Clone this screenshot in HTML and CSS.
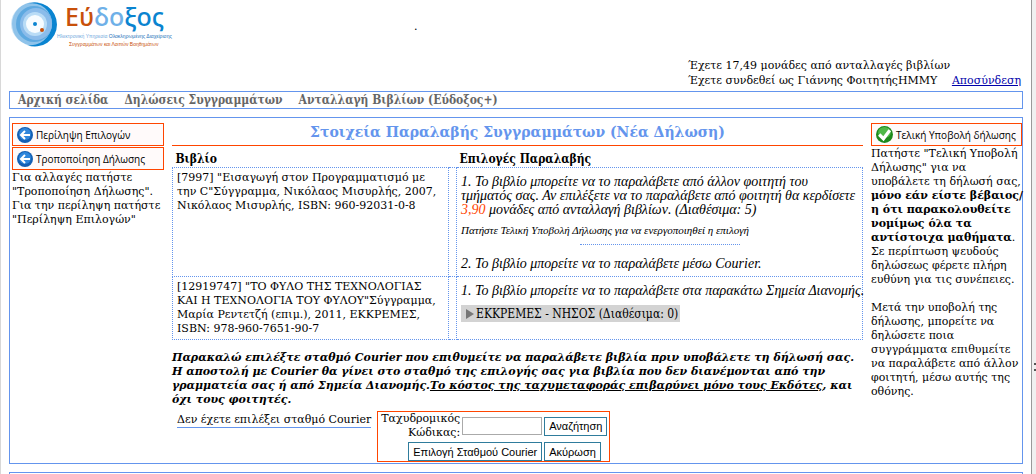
FILE: index.html
```html
<!DOCTYPE html>
<html lang="el">

<head>
	<meta charset="utf-8">
	<title>Εύδοξος</title>
	<link rel="stylesheet" href="styles.css">
</head>

<body>
	<div id="window">
		<div id="page">
			<div id="header">
				<svg class="logo" width="164" height="52" viewBox="0 0 164 52" role="img" aria-label="Εύδοξος">
					<circle cx="22" cy="23" r="20" fill="#cfe6f7" />
					<circle cx="25" cy="23" r="22" fill="#8fc3ea" />
					<path d="M18 3 A22 22 0 1 1 18 44 A22 22 0 0 0 43 24 A20 20 0 0 0 18 3 Z" fill="#0a84d0" />
					<circle cx="25" cy="23" r="18" fill="#5ea9e0" />
					<circle cx="27" cy="23" r="16" fill="#8bbcea" />
					<circle cx="26" cy="23" r="12" fill="#b9dcf6" />
					<circle cx="26" cy="23" r="9" fill="#f7fcff" />
					<circle cx="26" cy="23" r="2" fill="#0a84d0" />
					<circle cx="33" cy="29" r="2" fill="#c8500a" />
					<text class="logo-name" x="56" y="25"><tspan fill="#c8500a">Εύ</tspan><tspan fill="#6fb0e8">δο</tspan><tspan fill="#0a84d0">ξος</tspan></text>
					<text class="logo-line" x="48" y="37" fill="#6fa8dc">Ηλεκτρονική Υπηρεσία <tspan fill="#1a6fb8">Ολοκληρωμένης Διαχείρισης</tspan></text>
					<text class="logo-line" x="60" y="45" fill="#c8500a">Συγγραμμάτων και Λοιπών Βοηθημάτων</text>
				</svg>
				<span class="dot">.</span>
				<div class="user">
					<div>Έχετε 17,49 μονάδες από ανταλλαγές βιβλίων</div>
					<div class="user-line">
						<span>Έχετε συνδεθεί ως Γιάννης ΦοιτητήςΗΜΜΥ</span>
						<a href="#">Αποσύνδεση</a>
					</div>
				</div>
			</div>

			<div id="menu">
				<a href="#">Αρχική σελίδα</a>
				<a href="#">Δηλώσεις Συγγραμμάτων</a>
				<a href="#">Ανταλλαγή Βιβλίων (Εύδοξος+)</a>
			</div>

			<div id="main">
				<div class="side">
					<button type="button" class="action">
						<svg width="16" height="16" viewBox="0 0 16 16">
							<circle cx="8" cy="8" r="8" fill="#1560b4" />
							<circle cx="8" cy="7" r="6" fill="#2f86dc" />
							<path d="M13 8 H4 M8 4 L4 8 L8 12" fill="none" stroke="#fff" stroke-width="2" />
						</svg>
						Περίληψη Επιλογών
					</button>
					<button type="button" class="action">
						<svg width="16" height="16" viewBox="0 0 16 16">
							<circle cx="8" cy="8" r="8" fill="#1560b4" />
							<circle cx="8" cy="7" r="6" fill="#2f86dc" />
							<path d="M13 8 H4 M8 4 L4 8 L8 12" fill="none" stroke="#fff" stroke-width="2" />
						</svg>
						Τροποποίηση Δήλωσης
					</button>
					<p>Για αλλαγές πατήστε<br>"Τροποποίηση Δήλωσης".<br>Για την περίληψη πατήστε<br>"Περίληψη Επιλογών"</p>
				</div>

				<div id="content">
					<h1>Στοιχεία Παραλαβής Συγγραμμάτων (Νέα Δήλωση)</h1>
					<table class="books">
						<tr>
							<th class="book">Βιβλίο</th>
							<th class="gap"></th>
							<th>Επιλογές Παραλαβής</th>
						</tr>
						<tr>
							<td>[7997] "Εισαγωγή στον Προγραμματισμό με<br>την C"Σύγγραμμα, Νικόλαος Μισυρλής, 2007,<br>Νικόλαος Μισυρλής, ISBN: 960-92031-0-8</td>
							<td></td>
							<td class="options">
								<p>1. Το βιβλίο μπορείτε να το παραλάβετε από άλλον φοιτητή του<br>τμήματός σας. Αν επιλέξετε να το παραλάβετε από φοιτητή θα κερδίσετε<br><span class="units">3,90</span> μονάδες από ανταλλαγή βιβλίων. (Διαθέσιμα: 5)</p>
								<p class="note">Πατήστε Τελική Υποβολή Δήλωσης για να ενεργοποιηθεί η επιλογή</p>
								<hr>
								<p>2. Το βιβλίο μπορείτε να το παραλάβετε μέσω Courier.</p>
							</td>
						</tr>
						<tr>
							<td>[12919747] "ΤΟ ΦΥΛΟ ΤΗΣ ΤΕΧΝΟΛΟΓΙΑΣ<br>ΚΑΙ Η ΤΕΧΝΟΛΟΓΙΑ ΤΟΥ ΦΥΛΟΥ"Σύγγραμμα,<br>Μαρία Ρεντετζή (επιμ.), 2011, ΕΚΚΡΕΜΕΣ,<br>ISBN: 978-960-7651-90-7</td>
							<td></td>
							<td class="options">
								<p>1. Το βιβλίο μπορείτε να το παραλάβετε στα παρακάτω Σημεία Διανομής.</p>
								<div class="point">
									<svg width="9" height="10" viewBox="0 0 9 10"><path d="M1 0 L9 5 L1 10 Z" fill="#777" /></svg>
									ΕΚΚΡΕΜΕΣ - ΝΗΣΟΣ (Διαθέσιμα: 0)
								</div>
							</td>
						</tr>
					</table>

					<p class="warning">Παρακαλώ επιλέξτε σταθμό Courier που επιθυμείτε να παραλάβετε βιβλία πριν υποβάλετε τη δήλωσή σας.<br>Η αποστολή με Courier θα γίνει στο σταθμό της επιλογής σας για βιβλία που δεν διανέμονται από την<br>γραμματεία σας ή από Σημεία Διανομής.<u>Το κόστος της ταχυμεταφοράς επιβαρύνει μόνο τους Εκδότες</u>, και<br>όχι τους φοιτητές.</p>

					<div class="courier">
						<span class="station">Δεν έχετε επιλέξει σταθμό Courier</span>
						<form class="search">
							<label for="zip">Ταχυδρομικός<br>Κώδικας:</label>
							<input type="text" id="zip">
							<button type="button">Αναζήτηση</button>
							<button type="button" class="select">Επιλογή Σταθμού Courier</button>
							<button type="button">Ακύρωση</button>
						</form>
					</div>
				</div>

				<div class="side submit">
					<button type="button" class="action">
						<svg width="17" height="17" viewBox="0 0 16 16">
							<circle cx="8" cy="8" r="8" fill="#1d8a1d" />
							<ellipse cx="8" cy="6" rx="6" ry="5" fill="#4fb848" />
							<path d="M3 8 L7 12 L13 4" fill="none" stroke="#fff" stroke-width="3" />
						</svg>
						Τελική Υποβολή δήλωσης
					</button>
					<p>Πατήστε "Τελική Υποβολή<br>Δήλωσης" για να<br>υποβάλετε τη δήλωσή σας,<br><b>μόνο εάν είστε βέβαιος/<br>η ότι παρακολουθείτε<br>νομίμως όλα τα<br>αντίστοιχα μαθήματα</b>.<br>Σε περίπτωση ψευδούς<br>δηλώσεως φέρετε πλήρη<br>ευθύνη για τις συνέπειες.</p>
					<p class="later">Μετά την υποβολή της<br>δήλωσης, μπορείτε να<br>δηλώσετε ποια<br>συγγράμματα επιθυμείτε<br>να παραλάβετε από άλλον<br>φοιτητή, μέσω αυτής της<br>οθόνης.</p>
				</div>
			</div>

			<div id="footer"></div>
		</div>
		<div id="splitter"><span class="grip"></span></div>
	</div>
</body>

</html>
```
FILE: styles.css
```css
* {
	box-sizing: border-box;
}

body {
	margin: 0;
	overflow: hidden;
	background-color: white;
	color: black;
	font-family: "DejaVu Serif", serif;
	font-size: 11px;
	line-height: 14px;
}

p {
	margin: 0;
	white-space: nowrap;
}

#window {
	display: flex;
	height: 100vh;
	border-left: 1px solid #D8D8D8;
}

#page {
	flex: 1;
	min-width: 0;
	padding: 0 8px;
}

#splitter {
	display: flex;
	flex: none;
	justify-content: flex-end;
	width: 5px;
	padding-top: 363px;
	border-left: 1px solid #999;
	background-color: #F0F0F0;
}

.grip {
	width: 2px;
	height: 8px;
	border-top: 2px solid #555;
	border-bottom: 2px solid #555;
}

/* header */

#header {
	display: flex;
	height: 91px;
}

.logo {
	flex: none;
	margin-top: 1px;
	overflow: visible;
}

.logo-name {
	font-family: "Noto Sans", sans-serif;
	font-size: 25px;
	font-weight: 500;
}

.logo-line {
	font-family: "Liberation Sans", sans-serif;
	font-size: 5px;
}

.dot {
	margin: 20px 0 0 241px;
}

.user {
	align-self: flex-end;
	width: 335px;
	margin-left: auto;
	padding-bottom: 3px;
	line-height: 15px;
	white-space: nowrap;
}

.user-line {
	display: flex;
	justify-content: space-between;
	padding-right: 2px;
}

.user a {
	color: #0000AA;
}

#menu {
	display: flex;
	gap: 16px;
	height: 18px;
	padding: 0 8px;
	border: 1px solid cornflowerblue;
	font-family: "DejaVu Serif Condensed", "DejaVu Serif", serif;
	font-size: 12px;
	line-height: 16px;
}

#menu a {
	color: #666;
	font-weight: bold;
	text-decoration: none;
}

/* three columns */

#main {
	display: flex;
	gap: 8px;
	height: 347px;
	margin-top: 8px;
	padding: 5px 0 0 2px;
	border: 1px solid cornflowerblue;
}

.side {
	flex: none;
	width: 152px;
}

.submit {
	width: 151px;
}

.side p {
	margin-top: 1px;
}

.side .later {
	margin-top: 14px;
}

.action {
	display: flex;
	align-items: center;
	gap: 3px;
	width: 100%;
	height: 23px;
	margin-bottom: 1px;
	padding: 0 4px;
	border: 1px solid orangered;
	background-color: snow;
	color: black;
	font-family: "Open Sans", sans-serif;
	font-size: 10px;
	font-weight: 500;
	white-space: nowrap;
}

#content {
	flex: 1;
	min-width: 0;
}

#content h1 {
	margin: 0;
	padding-bottom: 4px;
	border-bottom: 1px solid orangered;
	color: cornflowerblue;
	font-size: 14px;
	line-height: 18px;
	text-align: center;
}

.books {
	width: 100%;
	margin-top: 6px;
	border-collapse: collapse;
	table-layout: fixed;
}

.books th {
	padding: 0 3px 1px;
	font-family: "DejaVu Serif Condensed", "DejaVu Serif", serif;
	font-size: 12px;
	text-align: left;
}

.books .book {
	width: 276px;
}

.books .gap {
	width: 8px;
	padding: 0;
}

.books td {
	padding: 3px 4px;
	border: 1px dotted cornflowerblue;
	vertical-align: top;
	white-space: nowrap;
}

.books .options {
	padding: 7px 4px 5px;
}

.options p {
	font-family: "Liberation Serif", serif;
	font-size: 14px;
	font-style: italic;
}

.units {
	color: orangered;
}

.options .note {
	margin-top: 6px;
	font-size: 11px;
}

.books hr {
	width: 160px;
	margin: 7px auto 12px;
	border: 0;
	border-top: 1px dotted cornflowerblue;
}

.point {
	display: inline-flex;
	align-items: center;
	gap: 2px;
	height: 17px;
	margin-top: 7px;
	padding: 0 2px 0 4px;
	background-color: lightgray;
	font-family: "DejaVu Serif Condensed", "DejaVu Serif", serif;
	font-size: 12px;
}

.warning {
	margin-top: 11px;
	font-style: italic;
	font-weight: bold;
}

.courier {
	display: flex;
	align-items: flex-start;
	gap: 6px;
	margin-top: 4px;
	padding-left: 5px;
	white-space: nowrap;
}

.station {
	margin-top: 2px;
	border-bottom: 1px solid cornflowerblue;
}

.search {
	display: grid;
	grid-template-columns: 80px 80px auto;
	align-items: center;
	gap: 2px;
	padding: 0 2px;
	border: 1px solid orangered;
}

.search label {
	text-align: right;
}

.search input {
	width: 100%;
	height: 18px;
	border: 1px solid #AAA;
}

.search button {
	justify-self: start;
	height: 19px;
	padding: 0 4px;
	border: 1px solid #2F7C9C;
	background-color: white;
	color: black;
	font-family: "Liberation Sans", sans-serif;
	font-size: 11px;
}

.search .select {
	grid-column: 1 / 3;
	justify-self: end;
}

#footer {
	height: 20px;
	margin-top: 8px;
	border: 1px solid cornflowerblue;
}
```
